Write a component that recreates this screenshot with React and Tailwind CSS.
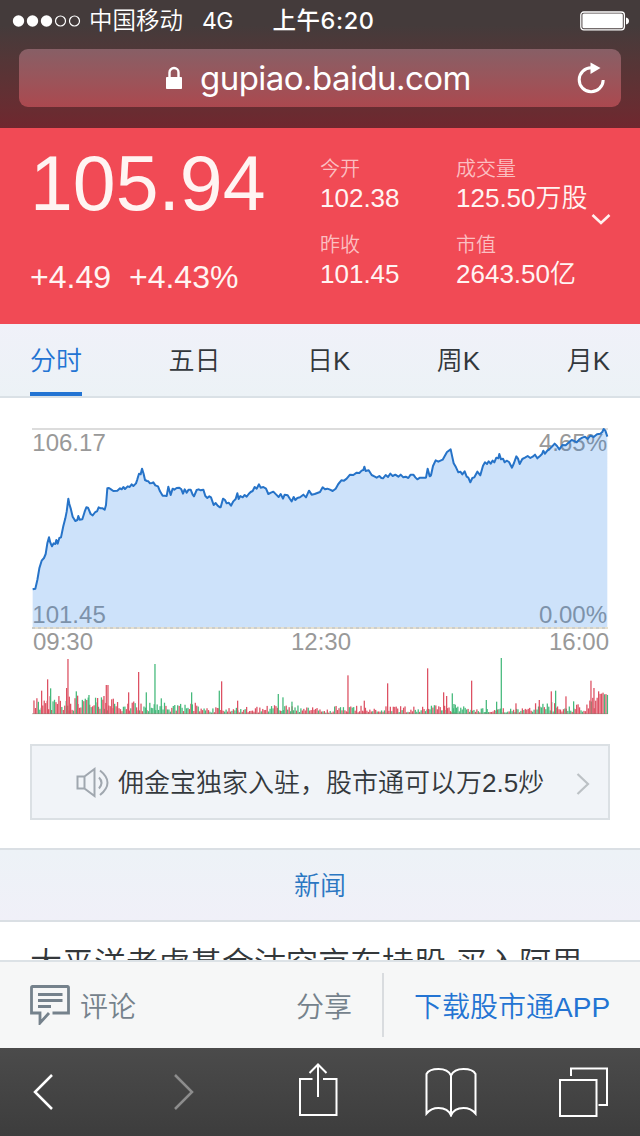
import { useState } from 'react';

const stats = [
  { label: '今开', value: '102.38' },
  { label: '成交量', value: '125.50万股' },
  { label: '昨收', value: '101.45' },
  { label: '市值', value: '2643.50亿' },
];

const tabs = ['分时', '五日', '日K', '周K', '月K'];

// Chart data uses a 1728 x 870 grid, three units per pixel
const price =
  '2,484 10,482 16,456 22,421 29,398 36,390 41,378 46,346 51,328 55,344 60,355 65,346 70,348 73,336 77,347 82,330 87,328 94,294 100,271 104,251 109,212 112,228 116,241 122,266 130,279 136,276 139,264 143,275 151,274 158,251 163,238 168,239 176,258 182,262 190,252 195,250 200,238 206,241 212,241 218,245 222,231 226,181 231,180 237,184 244,189 256,188 264,181 269,184 274,177 279,183 287,175 293,177 299,169 304,174 312,166 316,154 321,137 326,139 330,122 335,138 339,156 345,159 349,160 354,166 360,165 364,163 370,172 378,175 384,190 392,203 398,203 404,204 409,176 416,201 422,182 427,185 434,180 442,179 448,184 453,197 458,184 464,194 470,185 476,185 482,200 486,205 494,186 500,184 506,187 514,185 520,204 526,210 532,205 537,208 545,231 551,225 557,233 564,238 ' +
  '566,238 573,212 579,216 584,226 590,224 597,233 604,220 611,213 616,196 620,213 625,204 632,208 638,201 644,206 650,198 656,192 662,189 668,177 674,182 681,169 686,179 694,177 702,182 709,198 717,194 724,191 732,199 740,207 746,198 753,212 758,200 767,202 774,213 779,220 785,207 790,216 796,210 804,208 814,200 822,208 831,188 839,200 848,198 856,195 864,192 872,178 879,184 886,182 894,185 902,189 911,182 919,168 928,157 936,158 944,152 954,140 964,141 974,134 982,135 989,128 994,126 997,116 1001,129 1010,127 1019,141 1027,145 1034,149 1042,144 1048,150 1053,151 1061,141 1068,147 1075,137 1082,144 1090,140 1099,146 1106,140 1114,148 1121,146 1129,150 1136,140 1144,140 1150,148 1156,154 1164,149 ' +
  '1182,149 1187,122 1193,145 1197,142 1203,114 1211,97 1219,101 1232,95 1237,86 1245,72 1256,64 1260,83 1265,106 1272,118 1279,133 1285,131 1291,139 1298,130 1304,146 1309,149 1315,163 1321,150 1327,148 1336,131 1345,142 1353,113 1359,103 1365,108 1370,100 1376,107 1382,98 1387,103 1393,89 1399,91 1402,78 1407,94 1413,92 1418,103 1424,98 1431,102 1440,119 1446,105 1453,85 1458,92 1463,108 1471,93 1479,89 1487,84 1495,90 1502,86 1509,80 1516,91 1524,84 1530,78 1534,68 1539,77 1546,68 1554,62 1560,56 1568,47 1575,54 1582,64 1591,51 1601,52 1611,43 1619,36 1627,39 1634,43 1642,34 1651,29 1659,26 1667,33 1675,23 1685,27 1695,19 1705,17 1711,12 1715,3 1720,8 1726,26';

const spikes = [
  [29, 70, 'r'], [47, 104, 'r'], [56, 77, 'g'], [104, 78, 'r'], [108, 165, 'r'], [112, 52, 'r'],
  [133, 68, 'g'], [137, 55, 'r'], [171, 57, 'g'], [197, 48, 'r'], [216, 54, 'r'], [223, 87, 'r'],
  [228, 87, 'r'], [244, 46, 'r'], [290, 65, 'r'], [320, 126, 'r'], [343, 65, 'g'], [369, 150, 'g'],
  [388, 47, 'g'], [479, 65, 'g'], [562, 70, 'g'], [569, 98, 'r'], [617, 40, 'r'], [739, 60, 'g'],
  [753, 50, 'g'], [780, 37, 'g'], [948, 116, 'r'], [997, 40, 'r'], [1067, 92, 'r'], [1187, 137, 'r'],
  [1235, 65, 'r'], [1244, 54, 'r'], [1261, 62, 'g'], [1266, 30, 'g'], [1270, 28, 'g'], [1319, 100, 'r'],
  [1363, 42, 'g'], [1394, 37, 'g'], [1408, 168, 'g'], [1452, 32, 'r'], [1522, 42, 'r'], [1558, 68, 'r'],
  [1571, 70, 'g'], [1602, 53, 'r'], [1625, 38, 'g'], [1677, 100, 'r'], [1686, 78, 'r'],
];

// [until x, usual peak height, share of red]
const ranges = [
  [110, 54, 0.75], [240, 50, 0.6], [330, 38, 0.7], [400, 34, 0.1], [520, 34, 0.5], [700, 22, 0.6],
  [800, 28, 0.4], [900, 20, 0.7], [1180, 25, 0.6], [1300, 28, 0.5], [1510, 19, 0.5], [1580, 36, 0.6],
  [1670, 32, 0.6], [1700, 52, 0.8], [1728, 74, 0.5],
];

function buildVolume() {
  const bars = [];
  let seed = 17;
  const next = () => {
    seed = (seed * 1103515245 + 12345) % 2147483648;
    return seed / 2147483648;
  };
  for (let x = 6; x < 1728; x += 4.4) {
    const [, peak, red] = ranges.find(([end]) => x < end);
    const floor = x > 1690 ? 0.75 : 0.2;
    const h = peak * (floor + (1 - floor) * Math.pow(next(), 1.2));
    bars.push([x, h, next() < red ? 'r' : 'g']);
  }
  return bars.concat(spikes);
}

const volume = buildVolume();

function StatusBar() {
  return (
    <div className="relative h-[42px] font-['Inter','Noto_Sans_CJK_SC',sans-serif]">
      <div className="flex h-full items-center pl-[12px]">
        <svg width="70" height="14" viewBox="0 0 70 14" fill="#fff">
          <circle cx="6.5" cy="7" r="5.7" />
          <circle cx="20.5" cy="7" r="5.7" />
          <circle cx="34.5" cy="7" r="5.7" />
          <circle cx="48.5" cy="7" r="5" fill="none" stroke="#fff" strokeWidth="1.2" />
          <circle cx="62.5" cy="7" r="5" fill="none" stroke="#fff" strokeWidth="1.2" />
        </svg>
        <span className="ml-[7px] text-[23.5px] font-[350]">中国移动</span>
        <span className="ml-[19px] text-[23px] tracking-tight">4G</span>
        <svg className="mr-[10px] ml-auto" width="50" height="20" viewBox="0 0 50 20" fill="none">
          <rect x="0.8" y="1" width="43.6" height="17.8" rx="3" stroke="#fff" strokeWidth="1.3" />
          <rect x="2.4" y="2.6" width="40.4" height="14.6" rx="1.5" fill="#fff" />
          <path d="M46 6.5c4 .8 4 6.2 0 7z" fill="#fff" />
        </svg>
      </div>
      <div className="absolute inset-x-0 top-0 flex h-full items-center justify-center pl-[7px] text-[23.5px] font-medium tracking-[0.6px]">
        上午6:20
      </div>
    </div>
  );
}

function AddressBar() {
  return (
    <div className="mx-[19px] mt-[7px] flex h-[58px] items-center rounded-[9px] bg-linear-to-b from-[#875f66] to-[#ab484f] pr-[15px] font-['Inter',sans-serif]">
      <svg className="ml-[146px]" width="18" height="24" viewBox="0 0 18 24" fill="none">
        <path d="M4.500 12V6.500a4.500 4.500 0 0 1 9 0V12" stroke="#fff" strokeWidth="2.400" />
        <rect x="1" y="11" width="16" height="12" rx="0.8" fill="#fff" />
      </svg>
      <span className="ml-[17px] text-[33px] leading-none tracking-[-0.54px]">gupiao.baidu.com</span>
      <svg className="ml-auto" width="30" height="34" viewBox="0 0 30 34" fill="none">
        <path d="M15.500 6.800A12 12 0 1 0 27.200 19" stroke="#fff" strokeWidth="3" />
        <path d="M14.500 1.500l10 5.500-10 6z" fill="#fff" />
      </svg>
    </div>
  );
}

function Quote() {
  return (
    <div className="flex h-[196px] bg-[#f14a55] pl-[30px] text-[#fff4f2]">
      <div className="w-[290px]">
        <div className="mt-[15px] text-[77px] leading-[80px]">105.94</div>
        <div className="mt-[36px] flex gap-[18px] text-[32px] leading-9">
          <span>+4.49</span>
          <span>+4.43%</span>
        </div>
      </div>
      <div className="mt-[28px] grid grid-cols-[136px_auto] content-start gap-y-[18px]">
        {stats.map((s) => (
          <div key={s.label} className="h-[58px]">
            <div className="pt-px text-[20px] leading-[25px] text-[#fbbfc1]">{s.label}</div>
            <div className="pt-px text-[26px] leading-[30px] whitespace-nowrap">{s.value}</div>
          </div>
        ))}
      </div>
      <svg className="mt-[84px] ml-[3px]" width="20" height="14" viewBox="0 0 20 14" fill="none">
        <path d="M1.500 3l8.500 8 8.500-8" stroke="#fff0ee" strokeWidth="2.600" />
      </svg>
    </div>
  );
}

function Chart() {
  const color = { r: '#dd5163', g: '#45b97b' };
  return (
    <svg className="mt-[30px] ml-[32px] block overflow-visible" width="576" height="290" viewBox="0 0 1728 870">
      <g fill="#999" fontSize="72">
        <text x="1" y="70">106.17</text>
        <text x="1725" y="70" textAnchor="end">4.65%</text>
        <text x="1" y="585">101.45</text>
        <text x="1725" y="585" textAnchor="end">0.00%</text>
        <text x="3" y="666">09:30</text>
        <text x="867" y="666" textAnchor="middle">12:30</text>
        <text x="1731" y="666" textAnchor="end">16:00</text>
      </g>
      <path d="M0 3H1728" stroke="#dcdcdc" strokeWidth="6" />
      <polygon points={`2,600 ${price} 1726,600`} fill="#1d7be6" fillOpacity="0.22" />
      <polyline points={price} fill="none" stroke="#2673c8" strokeWidth="6" strokeLinejoin="round" />
      <path d="M0 600H1728" stroke="#e6e0cf" strokeWidth="6" />
      <path d="M0 600H1728" stroke="#c4c6c9" strokeWidth="5" strokeDasharray="9 9" />
      {volume.map(([x, h, c], i) => (
        <rect key={i} x={x - 2} y={858 - h} width="3.8" height={h} fill={color[c]} />
      ))}
      <path d="M0 857H1728" stroke="#8f7a70" strokeOpacity="0.6" strokeWidth="2.500" />
    </svg>
  );
}

function Notice() {
  return (
    <div className="mx-[30px] mt-[26px] flex h-[76px] items-center border-2 border-[#dbe0e4] bg-[#f1f4f8] pt-[3px] pl-[44px] text-[26px] text-[#34393d]">
      <svg className="mb-px" width="34" height="32" viewBox="0 0 34 32" fill="none" stroke="#a0a7af" strokeWidth="2">
        <path d="M8.500 9.500H1.500v12h7M8.500 9.500v12l10 7.500V2z" />
        <path d="M23 10.500q5 5 0 11M24 3.500q15 12 0 24.500" />
      </svg>
      <span className="ml-[8px] font-[350] whitespace-nowrap">佣金宝独家入驻，股市通可以万2.5炒</span>
      <svg className="mt-px mr-[18px] ml-auto" width="14" height="24" viewBox="0 0 14 24" fill="none">
        <path d="M1.500 2l10.500 10L1.500 22" stroke="#bcc1c5" strokeWidth="2.200" />
      </svg>
    </div>
  );
}

function ActionBar() {
  return (
    <div className="flex h-[88px] items-center border-t-2 border-[#dce2e6] bg-[#f6f7f7] pl-[30px] text-[28px] font-[350] text-[#75828c]">
      <svg width="40" height="40" viewBox="0 0 40 40" fill="none" stroke="#75828c" strokeWidth="2.800">
        <path d="M22.500 28H38.500V2.500q0-1-1-1h-35q-1 0-1 1V28h8.500v10l9-10" />
        <path d="M8 9.500h24.500M8 15.500h24.500M8 21.500h13" />
      </svg>
      <span className="ml-[10px] pt-[5px]">评论</span>
      <span className="ml-[160px] pt-[5px]">分享</span>
      <div className="ml-[30px] h-[64px] w-[2px] bg-[#d9dcdf]"></div>
      <span className="ml-[30px] pt-[5px] text-[#2374d3]">下载股市通APP</span>
    </div>
  );
}

function BrowserToolbar() {
  return (
    <div className="flex h-[88px] items-center bg-linear-to-b from-[#4b4b4b] to-[#3d3d3d] pl-[33px]">
      <svg width="20" height="38" viewBox="0 0 20 38" fill="none">
        <path d="M19 2L2 19l17 17" stroke="#fff" strokeWidth="2.500" />
      </svg>
      <svg className="ml-[121px]" width="20" height="38" viewBox="0 0 20 38" fill="none">
        <path d="M1 2l17 17L1 36" stroke="#8d8d8d" strokeWidth="2.500" />
      </svg>
      <svg className="mb-[4px] ml-[104px]" width="40" height="54" viewBox="0 0 40 54" fill="none" stroke="#fff" strokeWidth="2">
        <path d="M14.500 16H2v36h36.500V16H25M20 34V2M11.500 10l8.500-8.500 8.500 8.500" />
      </svg>
      <svg className="ml-[87px]" width="52" height="50" viewBox="0 0 52 50" fill="none" stroke="#fff" strokeWidth="2">
        <path d="M26 8.500Q23 2 13.500 2 4 2 1.500 7v39.500Q6 41 13.500 41 23 41 26 48.500 29 41 38.500 41 46 41 50.500 46.500V7Q48 2 38.500 2 29 2 26 8.500zV48" />
      </svg>
      <svg className="ml-[81px]" width="50" height="50" viewBox="0 0 50 50" fill="none" stroke="#fff" strokeWidth="2">
        <rect x="2" y="13" width="36.500" height="36" />
        <path d="M13 9V1.500H49v36.500h-8.500" />
      </svg>
    </div>
  );
}

function App() {
  const [active, setActive] = useState('分时');

  return (
    <div className="flex h-[1136px] w-[640px] flex-col overflow-hidden bg-white font-['Liberation_Sans','Noto_Sans_CJK_SC',sans-serif]">
      <div className="h-[128px] shrink-0 bg-linear-to-b from-[#443b3b] from-20% to-[#70272f] text-white">
        <StatusBar />
        <AddressBar />
      </div>
      <div className="min-h-0 flex-1 overflow-hidden font-[350]">
        <Quote />
        <div className="flex h-[74px] justify-between border-b-2 border-[#dae1e6] bg-linear-to-b from-[#f0f1f9] to-[#ecf2f6] px-[30px] text-[26px] text-[#32373b]">
          {tabs.map((tab) => (
            <button
              key={tab}
              onClick={() => setActive(tab)}
              className={tab === active ? 'h-[72px] border-b-4 border-[#2374d3] pt-[7px] text-[#2374d3]' : 'h-[72px] pt-[3px]'}
            >
              {tab}
            </button>
          ))}
        </div>
        <Chart />
        <Notice />
        <div className="mt-[28px] flex h-[74px] items-center justify-center border-y-2 border-[#dadfe4] bg-linear-to-b from-[#edf2f7] to-[#f0f0f8] pt-[2px] text-[26px] text-[#2b77c2]">
          新闻
        </div>
        <div className="mt-[20px] pl-[30px] text-[32px] leading-[44px] whitespace-nowrap text-[#34383b]">
          太平洋老虎基金沽空京东持股 买入阿里
        </div>
      </div>
      <ActionBar />
      <BrowserToolbar />
    </div>
  );
}

export default App;
